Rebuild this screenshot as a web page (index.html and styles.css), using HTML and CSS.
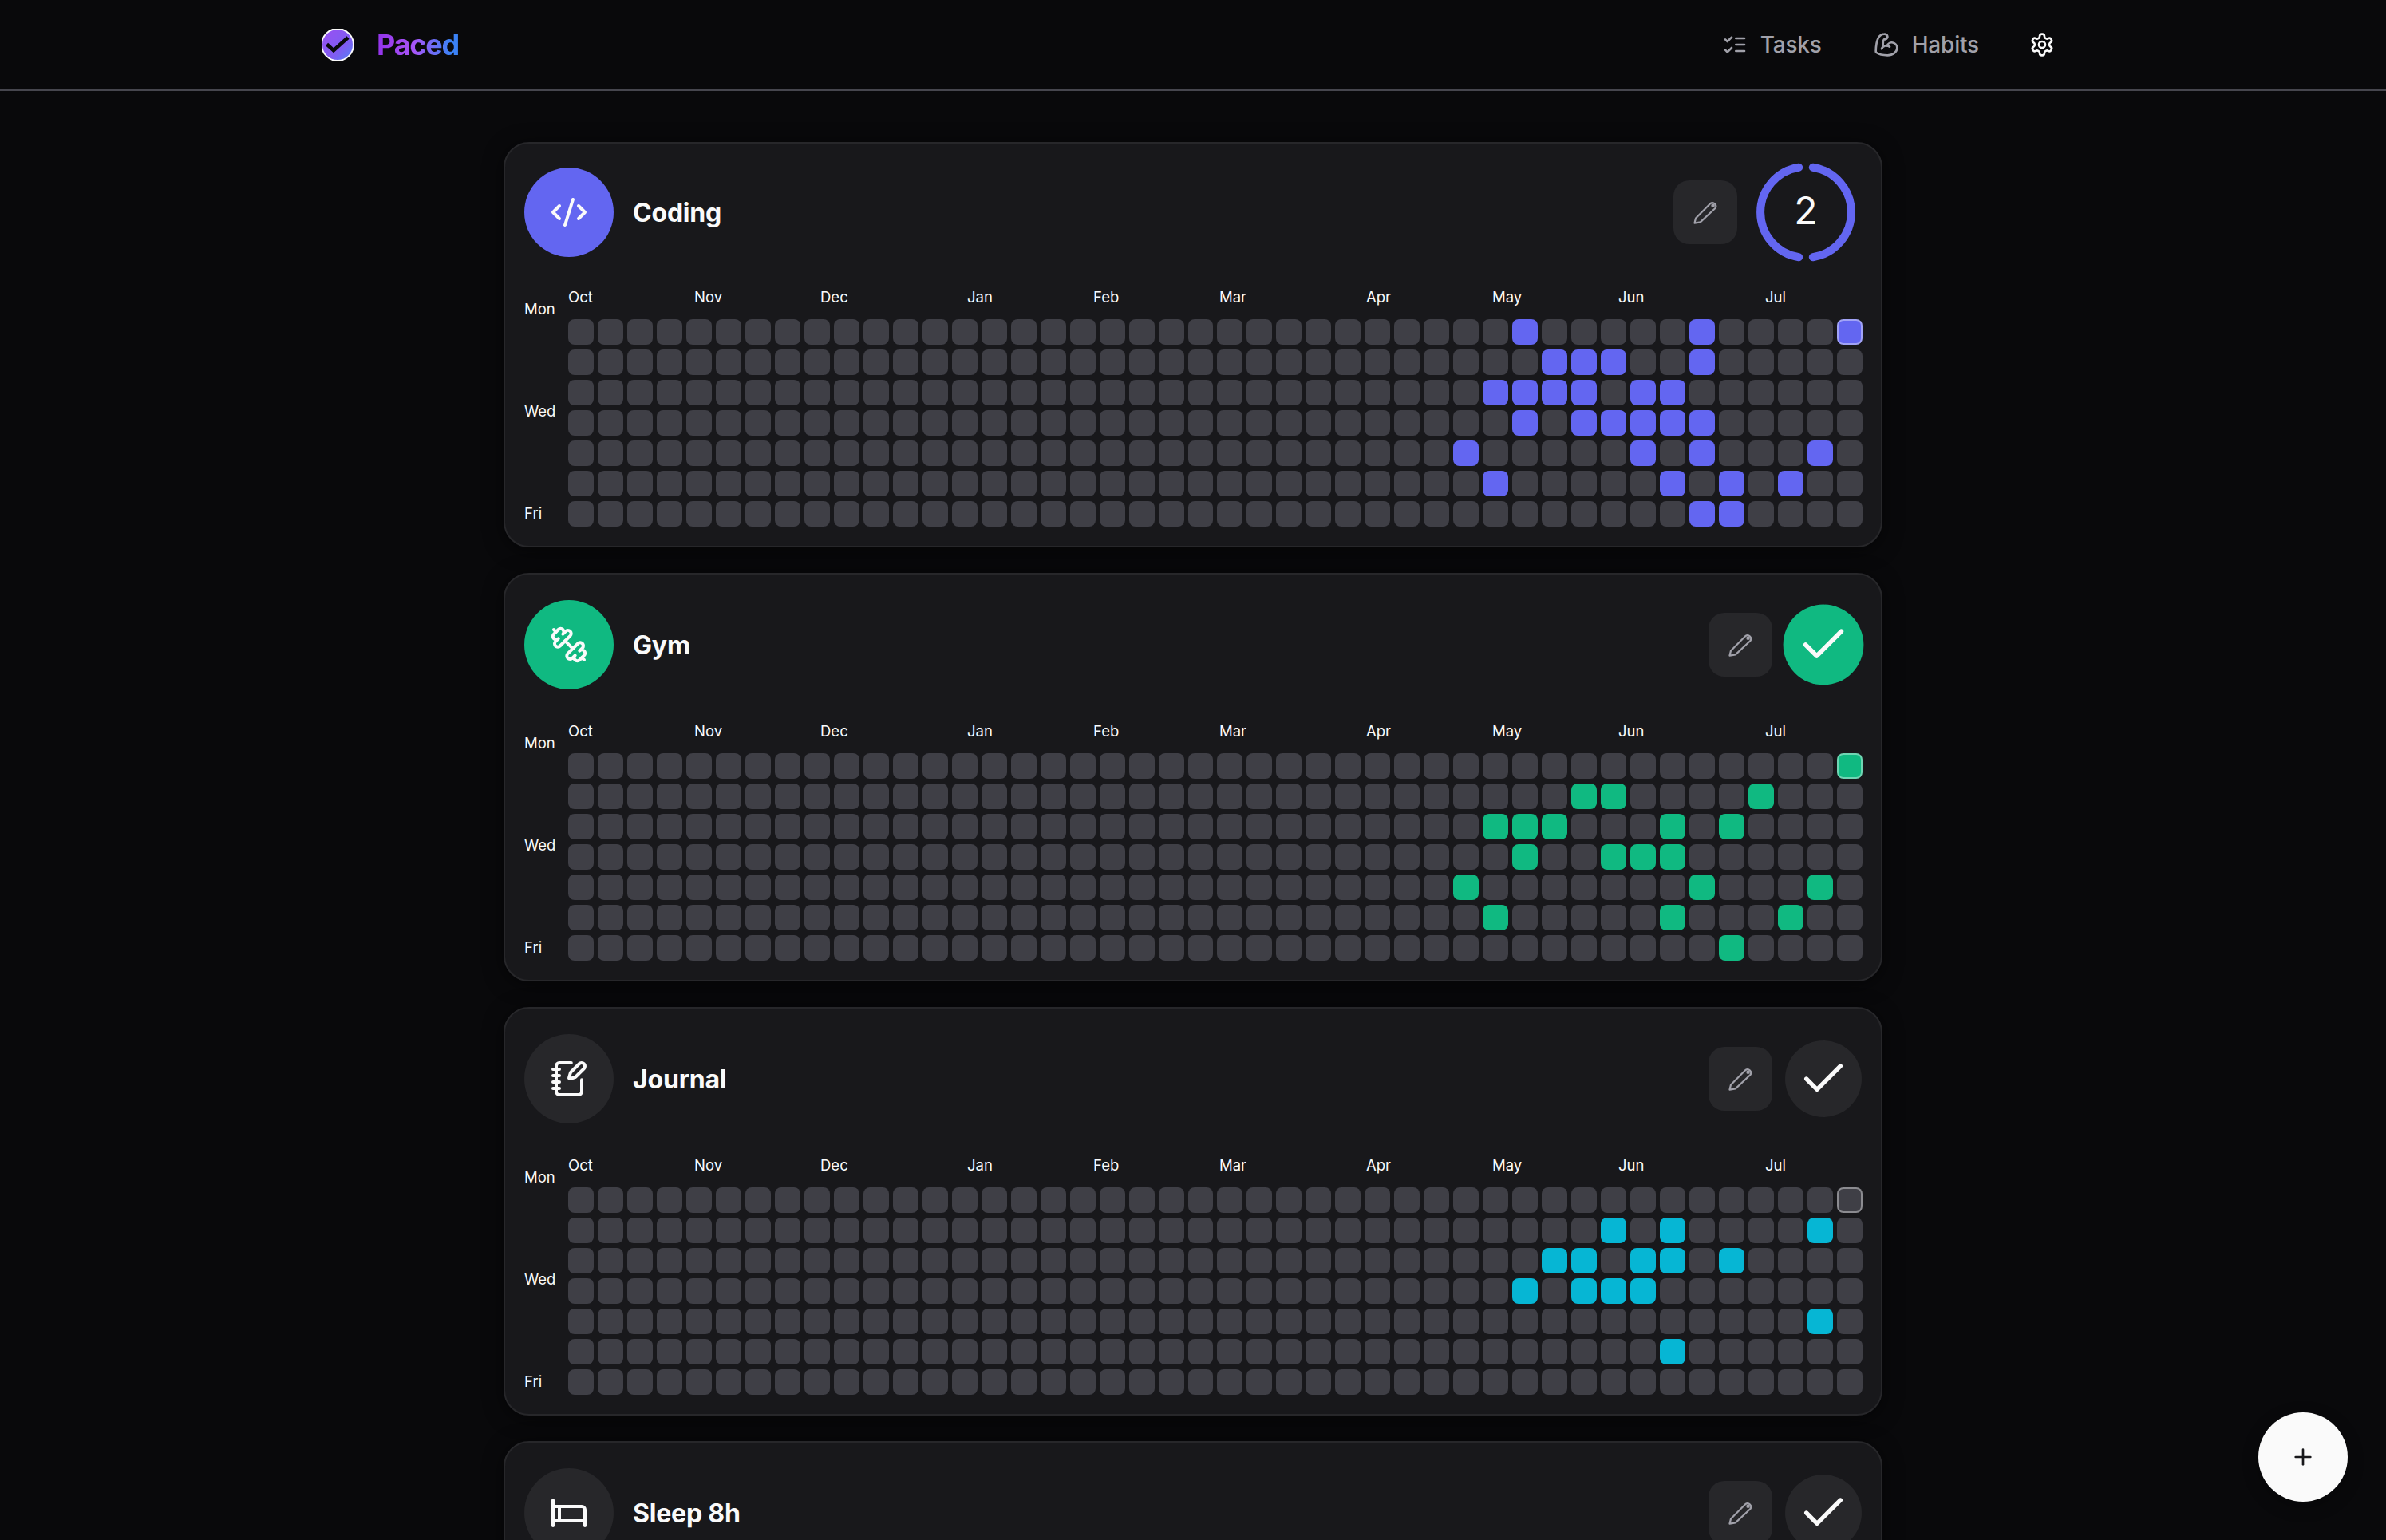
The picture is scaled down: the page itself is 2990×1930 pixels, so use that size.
FILE: index.html
```html
<!DOCTYPE html>
<html lang="en">
<head>
<meta charset="utf-8">
<title>Paced</title>
<link rel="stylesheet" href="styles.css">
</head>
<body>
<header class="topbar">
  <div class="topbar-inner">
    <a class="brand">
      <svg class="brand-mark" viewBox="0 0 40 40"><defs><linearGradient id="bm" x1="0" y1="0" x2="1" y2="1"><stop offset="0" stop-color="#9a4ff2"/><stop offset=".62" stop-color="#7f5cf2"/><stop offset="1" stop-color="#4f86f7"/></linearGradient></defs><circle cx="20" cy="20" r="20" fill="url(#bm)"/><path d="M6.5 19.5 15 27.2 33 11" fill="none" stroke="#09090b" stroke-width="4.6"/></svg>
      <span class="brand-name">Paced</span>
    </a>
    <nav class="nav">
      <a class="nav-link"><svg class="i32" viewBox="0 0 24 24"><path d="m3 17 2 2 4-4"/><path d="m3 7 2 2 4-4"/><path d="M13 6h8"/><path d="M13 12h8"/><path d="M13 18h8"/></svg>Tasks</a>
      <a class="nav-link"><svg class="i32" viewBox="0 0 24 24"><path d="M12.409 13.017A5 5 0 0 1 22 15c0 3.866-4 7-9 7-4.077 0-8.153-.82-10.371-2.462-.426-.316-.631-.832-.62-1.362C2.118 12.723 2.627 2 10 2a3 3 0 0 1 3 2c.308 1.03-.5 2.5-2 3"/><path d="M15 14a5 5 0 0 0-7.584 2"/><path d="M9.964 6.825C8.019 7.977 9.5 13 8 15"/></svg>Habits</a>
      <a class="nav-gear"><svg class="i32" viewBox="0 0 24 24"><path d="M12.22 2h-.44a2 2 0 0 0-2 2v.18a2 2 0 0 1-1 1.73l-.43.25a2 2 0 0 1-2 0l-.15-.08a2 2 0 0 0-2.73.73l-.22.38a2 2 0 0 0 .73 2.73l.15.1a2 2 0 0 1 1 1.72v.51a2 2 0 0 1-1 1.74l-.15.09a2 2 0 0 0-.73 2.73l.22.38a2 2 0 0 0 2.73.73l.15-.08a2 2 0 0 1 2 0l.43.25a2 2 0 0 1 1 1.73V20a2 2 0 0 0 2 2h.44a2 2 0 0 0 2-2v-.18a2 2 0 0 1 1-1.73l.43-.25a2 2 0 0 1 2 0l.15.08a2 2 0 0 0 2.73-.73l.22-.39a2 2 0 0 0-.73-2.73l-.15-.08a2 2 0 0 1-1-1.74v-.5a2 2 0 0 1 1-1.74l.15-.09a2 2 0 0 0 .73-2.73l-.22-.38a2 2 0 0 0-2.73-.73l-.15.08a2 2 0 0 1-2 0l-.43-.25a2 2 0 0 1-1-1.73V4a2 2 0 0 0-2-2z"/><circle cx="12" cy="12" r="3"/></svg></a>
    </nav>
  </div>
</header>

<main class="list">

  <section class="card accent-indigo" data-habit="coding">
    <div class="card-head">
      <div class="badge"><svg class="i48" viewBox="0 0 24 24"><path d="m18 16 4-4-4-4"/><path d="m6 8-4 4 4 4"/><path d="m14.5 4-5 16"/></svg></div>
      <h2 class="title">Coding</h2>
      <div class="actions actions-ring">
        <button class="edit"><svg class="pencil" viewBox="0 0 32 32"><path d="M2.5 29.6 4 23.6 22.4 5a4.3 4.3 0 0 1 6 6L9.8 28.4z"/><circle cx="25.6" cy="7.8" r="1.2"/></svg></button>
        <div class="ring">
          <svg class="ring-svg" viewBox="0 0 124 124"><path d="M70.8 5.7A57 57 0 0 1 70.8 118.3"/><path d="M53.2 118.3A57 57 0 0 1 53.2 5.7"/></svg>
          <span class="ring-count">2</span>
        </div>
      </div>
    </div>
    <div class="heat"></div>
  </section>

  <section class="card accent-emerald" data-habit="gym">
    <div class="card-head">
      <div class="badge"><svg class="i48 flip" viewBox="0 0 24 24"><path d="M17.596 12.768a2 2 0 1 0 2.829-2.829l-1.768-1.767a2 2 0 0 0 2.828-2.829l-2.828-2.828a2 2 0 0 0-2.829 2.828l-1.767-1.768a2 2 0 1 0-2.829 2.829z"/><path d="m2.5 21.5 1.4-1.4"/><path d="m20.1 3.9 1.4-1.4"/><path d="M5.343 21.485a2 2 0 1 0 2.829-2.828l1.767 1.768a2 2 0 1 0 2.829-2.829l-6.364-6.364a2 2 0 1 0-2.829 2.829l1.768 1.767a2 2 0 0 0-2.828 2.829z"/><path d="m9.6 14.4 4.8-4.8"/></svg></div>
      <h2 class="title">Gym</h2>
      <div class="actions">
        <button class="edit"><svg class="pencil" viewBox="0 0 32 32"><path d="M2.5 29.6 4 23.6 22.4 5a4.3 4.3 0 0 1 6 6L9.8 28.4z"/><circle cx="25.6" cy="7.8" r="1.2"/></svg></button>
        <button class="check check-done"><svg class="i64" viewBox="0 0 24 24"><path d="M20 6 9 17l-5-5"/></svg></button>
      </div>
    </div>
    <div class="heat"></div>
  </section>

  <section class="card accent-cyan" data-habit="journal">
    <div class="card-head">
      <div class="badge badge-muted"><svg class="i48" viewBox="0 0 24 24"><path d="M13.4 2H6a2 2 0 0 0-2 2v16a2 2 0 0 0 2 2h12a2 2 0 0 0 2-2v-7.4"/><path d="M2 6h4"/><path d="M2 10h4"/><path d="M2 14h4"/><path d="M2 18h4"/><path d="M21.378 5.626a1 1 0 1 0-3.004-3.004l-5.01 5.012a2 2 0 0 0-.506.854l-.837 2.87a.5.5 0 0 0 .62.62l2.87-.837a2 2 0 0 0 .854-.506z"/></svg></div>
      <h2 class="title">Journal</h2>
      <div class="actions">
        <button class="edit"><svg class="pencil" viewBox="0 0 32 32"><path d="M2.5 29.6 4 23.6 22.4 5a4.3 4.3 0 0 1 6 6L9.8 28.4z"/><circle cx="25.6" cy="7.8" r="1.2"/></svg></button>
        <button class="check"><svg class="i64" viewBox="0 0 24 24"><path d="M20 6 9 17l-5-5"/></svg></button>
      </div>
    </div>
    <div class="heat"></div>
  </section>

  <section class="card accent-indigo">
    <div class="card-head">
      <div class="badge badge-muted"><svg class="i48" viewBox="0 0 24 24"><path d="M2 4v16"/><path d="M2 8h18a2 2 0 0 1 2 2v10"/><path d="M2 17h20"/><path d="M6 8v9"/></svg></div>
      <h2 class="title">Sleep 8h</h2>
      <div class="actions">
        <button class="edit"><svg class="pencil" viewBox="0 0 32 32"><path d="M2.5 29.6 4 23.6 22.4 5a4.3 4.3 0 0 1 6 6L9.8 28.4z"/><circle cx="25.6" cy="7.8" r="1.2"/></svg></button>
        <button class="check"><svg class="i64" viewBox="0 0 24 24"><path d="M20 6 9 17l-5-5"/></svg></button>
      </div>
    </div>
  </section>

</main>

<button class="fab"><svg class="i32 fab-plus" viewBox="0 0 24 24"><path d="M5 12h14"/><path d="M12 5v14"/></svg></button>
<script src="app.js"></script>
</body>
</html>
```
FILE: styles.css
```css
* { box-sizing: border-box; }
html { overflow: hidden; }
body {
  margin: 0;
  background: #09090b;
  color: #fafafa;
  font-family: Inter, "Liberation Sans", sans-serif;
}
svg { display: block; fill: none; stroke: currentColor; stroke-width: 2; stroke-linecap: round; stroke-linejoin: round; }
button { border: 0; padding: 0; color: inherit; font: inherit; cursor: pointer; }

.topbar { height: 114px; border-bottom: 2px solid #46464e; }
.topbar-inner { height: 112px; padding: 0 403px; display: flex; align-items: center; justify-content: space-between; }
.brand { display: flex; align-items: center; gap: 29px; }
.brand-mark { width: 40px; height: 40px; stroke-linecap: butt; stroke-linejoin: miter; }
.brand-name {
  font-size: 36px; font-weight: 650; letter-spacing: -1.2px;
  background: linear-gradient(90deg, #9333ea, #a855f7 45%, #3b82f6 90%);
  -webkit-background-clip: text; background-clip: text; color: transparent;
}
.nav { display: flex; align-items: center; }
.nav-link { display: flex; align-items: center; gap: 16px; padding: 0 16px; margin-right: 33px; color: #a1a1aa; font-size: 28px; font-weight: 500; letter-spacing: -0.2px; }
.nav-link + .nav-link { margin-right: 49px; }
.nav-gear { display: flex; padding: 12px; margin-left: -14px; color: #fafafa; }
.i32 { width: 32px; height: 32px; }
.i48 { width: 48px; height: 48px; }
.i64 { width: 64px; height: 64px; }
.flip { transform: scaleX(-1); }

.list { width: 1728px; margin: 0 auto; padding-top: 64px; display: flex; flex-direction: column; gap: 32px; }
.card {
  flex: none;
  padding: 24px;
  background: #18181b;
  border: 2px solid #27272a;
  border-radius: 32px;
  box-shadow: 0 4px 24px rgba(0, 0, 0, .55);
}
.accent-indigo { --accent: #6366f1; }
.accent-emerald { --accent: #10b981; }
.accent-cyan { --accent: #06b6d4; }

.card-head { display: flex; align-items: center; gap: 24px; }
.badge { flex: none; width: 112px; height: 112px; border-radius: 50%; background: var(--accent); display: flex; align-items: center; justify-content: center; }
.badge-muted { background: #27272a; }
.title { margin: 0; padding-top: 2px; flex: 1; font-size: 32px; line-height: 40px; font-weight: 650; letter-spacing: -0.2px; }
.actions { display: flex; align-items: center; gap: 16px; }
.actions-ring { gap: 24px; padding-right: 8px; }
.edit { width: 80px; height: 80px; border-radius: 20px; background: #27272a; color: #a1a1aa; display: flex; align-items: center; justify-content: center; }
.pencil { width: 32px; height: 32px; stroke-width: 2.2; }
.check { width: 96px; height: 96px; margin: 16px 0; border-radius: 50%; background: #27272a; display: flex; align-items: center; justify-content: center; }
.check-done { background: #10b981; transform: scale(1.05); }
.ring { position: relative; width: 124px; height: 124px; }
.ring-svg { width: 124px; height: 124px; stroke: var(--accent); stroke-width: 10; }
.ring-count { position: absolute; inset: 0; display: flex; align-items: center; justify-content: center; font-size: 48px; line-height: 1; padding: 0 0 4px 0; }

.heat { margin-top: 32px; display: flex; }
.days { width: 55px; flex: none; padding: 16px 0 6px; display: flex; flex-direction: column; justify-content: space-between; font-size: 18.5px; line-height: 22px; }
.heat-main { flex: none; width: 1622px; }
.months { display: flex; height: 22px; padding-top: 1px; margin-bottom: 18px; font-size: 18.5px; line-height: 22px; }
.m4 { width: 158px; flex: none; }
.m5 { width: 184px; flex: none; }
.grid { display: grid; grid-template-columns: repeat(44, 1fr); grid-auto-rows: 32px; column-gap: 5px; row-gap: 6px; }
.cell { border-radius: 8px; background: #3f3f46; }
.cell.on { background: var(--accent); }
.cell.today { border: 2px solid rgba(255, 255, 255, .4); }

.fab { position: fixed; right: 48px; bottom: 48px; width: 112px; height: 112px; border-radius: 50%; background: #fafafa; color: #18181b; display: flex; align-items: center; justify-content: center; box-shadow: 0 6px 20px rgba(0, 0, 0, .3); }
```
FILE: app.js
```js
var MONTHS = [["Oct", 4], ["Nov", 4], ["Dec", 5], ["Jan", 4], ["Feb", 4], ["Mar", 5], ["Apr", 4], ["May", 4], ["Jun", 5], ["Jul", 4]];
var DAYS = ["Mon", "Wed", "Fri"];
var FIRST = 29;
var DATA = {
  coding: [[3, 9, 14], [4, 5, 6, 9], [2, 3, 4, 5, 7, 8], [3, 5, 6, 7, 8, 9], [1, 7, 9, 13], [2, 8, 10, 12], [9, 10]],
  gym: [[14], [5, 6, 11], [2, 3, 4, 8, 10], [3, 6, 7, 8], [1, 9, 13], [2, 8, 12], [10]],
  journal: [[], [6, 8, 13], [4, 5, 7, 8, 10], [3, 5, 6, 7], [13], [8], []]
};

document.querySelectorAll(".card[data-habit]").forEach(function (card) {
  var on = DATA[card.dataset.habit];
  var heat = card.querySelector(".heat");

  var days = document.createElement("div");
  days.className = "days";
  DAYS.forEach(function (d) {
    var s = document.createElement("span");
    s.textContent = d;
    days.appendChild(s);
  });

  var main = document.createElement("div");
  main.className = "heat-main";
  var months = document.createElement("div");
  months.className = "months";
  MONTHS.forEach(function (m) {
    var s = document.createElement("span");
    s.className = "m" + m[1];
    s.textContent = m[0];
    months.appendChild(s);
  });

  var grid = document.createElement("div");
  grid.className = "grid";
  for (var r = 0; r < 7; r++) {
    for (var c = 0; c < 44; c++) {
      var cell = document.createElement("div");
      cell.className = "cell";
      if (c >= FIRST && on[r].indexOf(c - FIRST) !== -1) cell.className += " on";
      if (r === 0 && c === 43) cell.className += " today";
      grid.appendChild(cell);
    }
  }
  main.appendChild(months);
  main.appendChild(grid);
  heat.appendChild(days);
  heat.appendChild(main);
});
```
